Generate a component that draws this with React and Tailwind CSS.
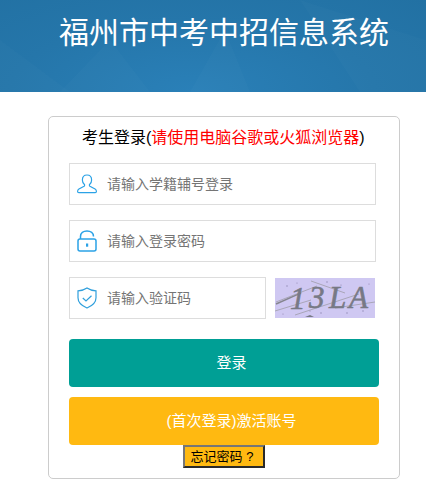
const font = { fontFamily: '"Liberation Sans", "Noto Sans CJK SC", sans-serif' };

function Field({ icon, placeholder, className }) {
  return (
    <div className={`flex h-[42px] items-center border border-[#dddddd] bg-white pl-[7px] ${className}`}>
      <span className="flex h-[24px] w-[22px] items-center justify-center">{icon}</span>
      <input
        readOnly
        placeholder={placeholder}
        className="ml-[8px] w-full min-w-0 bg-transparent pl-[2px] text-[14px] text-[#555] outline-none placeholder:text-[#757575]"
      />
    </div>
  );
}

const UserIcon = (
  <svg width="20" height="20" viewBox="0 0 20 20" fill="none" stroke="#2ba2e6" strokeWidth="1.2">
    <path d="M10 1c-3 0-4.600 2.200-4.600 4.900 0 2 .8 3.600 2 4.600.3.3.3 1.300-.3 1.700L1.900 15c-1 .6-1.300 1.500-1.300 2.400 0 .8.5 1.200 1.200 1.200h16.400c.7 0 1.200-.4 1.200-1.200 0-.9-.3-1.800-1.300-2.400l-5.200-2.800c-.6-.4-.6-1.400-.3-1.700 1.200-1 2-2.600 2-4.600C14.600 3.200 13 1 10 1z" />
  </svg>
);

const LockIcon = (
  <svg width="20" height="22" viewBox="0 0 20 22" fill="none" stroke="#2ba2e6" strokeWidth="1.5">
    <path d="M3.500 9V6.500C3.500 3 6.300 1 10 1s6.500 2 6.500 5.500" />
    <rect x="1" y="9" width="18" height="12" rx="2" />
    <rect x="9" y="13.500" width="2.200" height="3.200" fill="#2ba2e6" stroke="none" />
  </svg>
);

const ShieldIcon = (
  <svg width="20" height="22" viewBox="0 0 20 22" fill="none" stroke="#2f9fdc" strokeWidth="1.2">
    <path d="M10 1c2.300 1.700 5.300 2.600 9 2.800v7c0 4.600-3.500 8-9 10.200C4.500 18.800 1 15.400 1 10.800v-7C4.700 3.600 7.700 2.700 10 1z" />
    <path d="M5.800 11l3.200 3 5.500-5.300" />
  </svg>
);

function Captcha() {
  return (
    <svg width="100" height="40" viewBox="0 0 100 40" className="block">
      <rect width="100" height="40" fill="#cfc8f2" />
      <path d="M1 24L42 8M0 33L36 22M20 37L84 16M60 30L100 24M36 3L70 15" stroke="#a9a6b8" strokeWidth="1" fill="none" />
      <path d="M1 26L26 15" stroke="#85858f" strokeWidth="1.500" fill="none" />
      <g fontFamily="Liberation Serif, serif" fontStyle="italic" fontSize="31" fill="#777985" stroke="#777985" strokeWidth="0.6">
        <text x="15" y="31">1</text>
        <text x="34" y="30">3</text>
        <text x="54" y="30">L</text>
        <text x="74" y="30">A</text>
      </g>
      <g fill="#8f86b0">
        <circle cx="12" cy="8" r=".7" /><circle cx="22" cy="5" r=".6" /><circle cx="52" cy="4" r=".7" /><circle cx="66" cy="7" r=".6" />
        <circle cx="88" cy="33" r=".7" /><circle cx="46" cy="35" r=".7" /><circle cx="35" cy="33" r=".6" /><circle cx="72" cy="35" r=".7" />
        <circle cx="8" cy="36" r=".6" /><circle cx="94" cy="6" r=".6" />
      </g>
      <path d="M30 39l5-2 4 2z" fill="#777985" />
    </svg>
  );
}

export default function App() {
  return (
    <div style={font} className="relative h-[496px] w-[426px] overflow-hidden bg-white">
      <header className="relative h-[92px] overflow-hidden bg-[radial-gradient(ellipse_at_45%_100%,#2a80b8_0%,#2576aa_55%,#2271a3_100%)] pl-[59px] pt-[14px]">
        <svg width="426" height="92" className="absolute left-0 top-0" fill="#ffffff" fillOpacity="0.015">
          <path d="M0 40L70 92H0z" />
          <path d="M60 92L110 40L150 92z" />
          <path d="M190 92L225 30L250 92z" />
          <path d="M300 0L360 92H426V40z" />
        </svg>
        <h1 className="relative text-[30px] leading-[38px] font-normal whitespace-nowrap text-white">福州市中考中招信息系统</h1>
      </header>

      <main className="ml-[48px] mt-[24px] h-[363px] w-[352px] rounded-[5px] border border-[#cccccc] px-[20px]">
        <p className="mt-[10px] pl-[13px] text-[16px] leading-[22px] whitespace-nowrap text-black">
          考生登录(<span className="text-[#ff0000]">请使用电脑谷歌或火狐浏览器</span>)
        </p>

        <div className="mt-[14px] flex w-[307px] flex-col gap-[15px]">
          <Field icon={UserIcon} placeholder="请输入学籍辅号登录" />
          <Field icon={LockIcon} placeholder="请输入登录密码" />
          <div className="flex items-center">
            <Field icon={ShieldIcon} placeholder="请输入验证码" className="w-[197px]" />
            <div className="ml-[9px]"><Captcha /></div>
          </div>
        </div>

        <button className="mt-[20px] block h-[48px] w-[310px] rounded-[4px] bg-[#009f95] pl-[15px] text-[15px] text-white">登录</button>
        <button className="mt-[10px] block h-[48px] w-[310px] rounded-[4px] bg-[#ffb911] pl-[15px] text-[15px] text-white">(首次登录)激活账号</button>
        <button className="ml-[114px] block h-[23px] w-[82px] border-2 border-t-[#767676] border-l-[#767676] border-r-[#2a2a2a] border-b-[#2a2a2a] bg-[#ffb911] pr-[4px] text-[13px] leading-[17px] text-black">忘记密码 ?</button>
      </main>
    </div>
  );
}
